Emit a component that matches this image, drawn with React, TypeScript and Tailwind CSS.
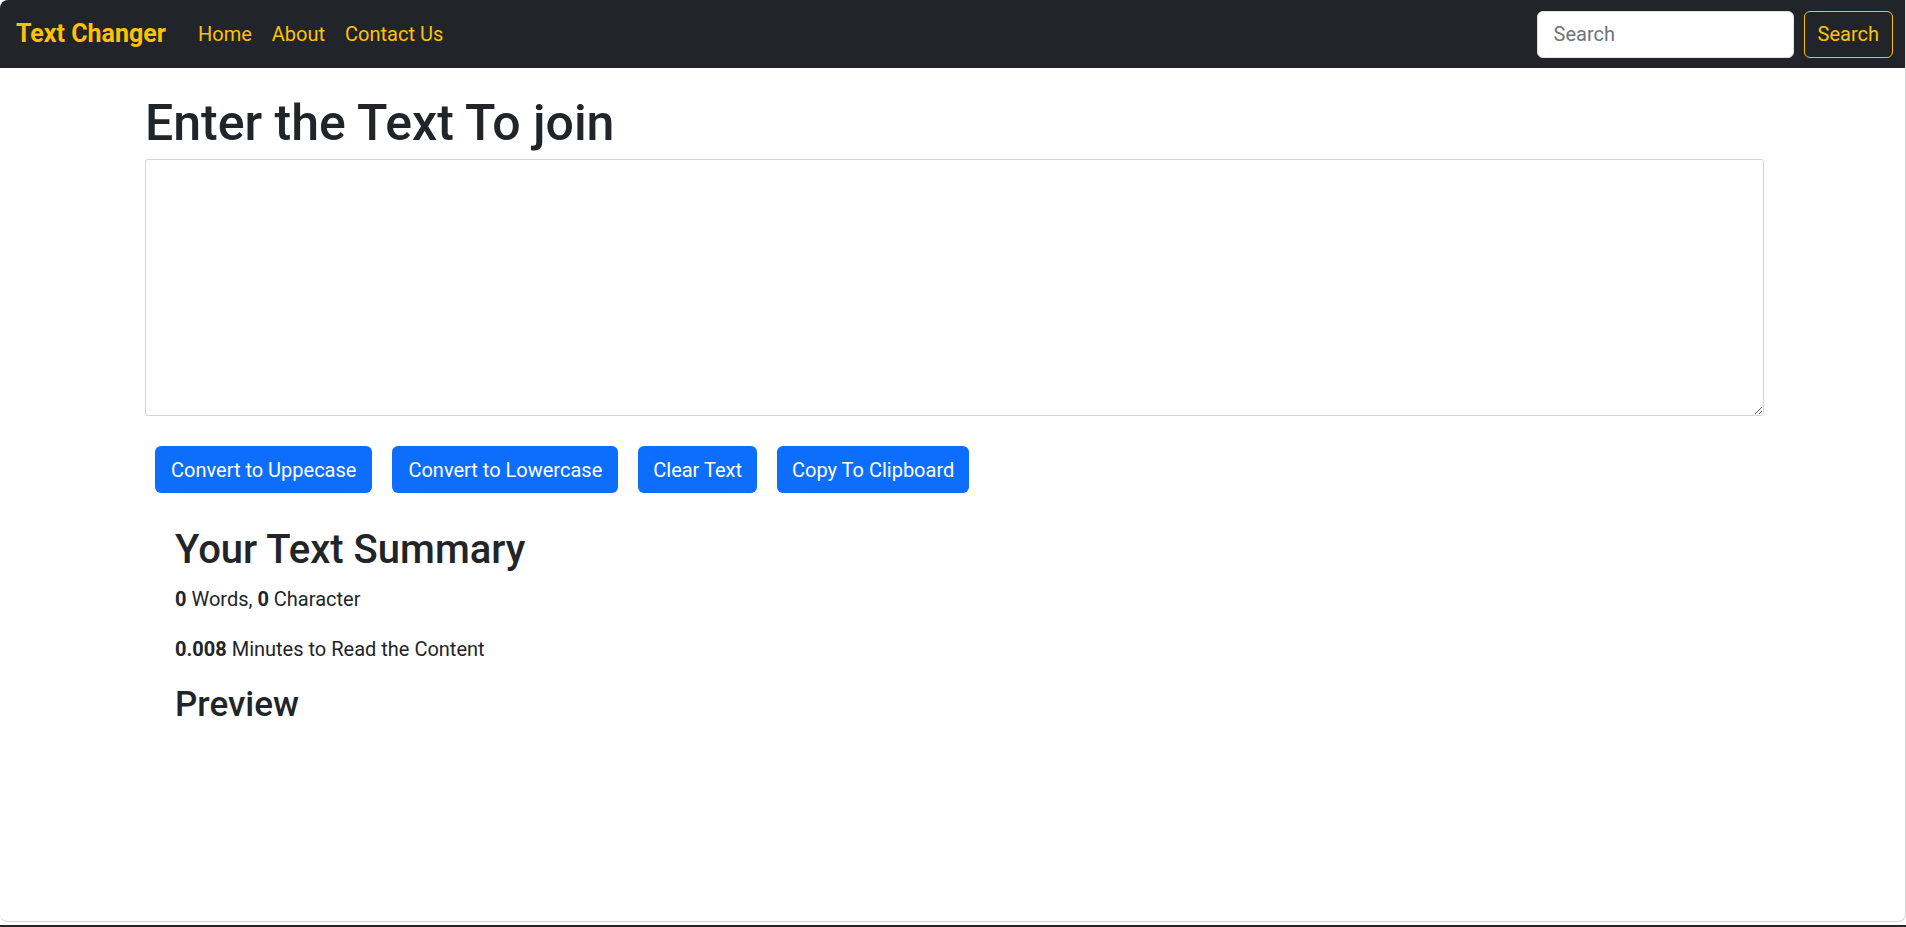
import { useState } from "react";

const Navbar = () => {
  return (
    <nav className="h-[68px] shrink-0 bg-[#212529] flex items-center justify-between pl-[16px] pr-[12px]">
      <div className="flex items-center">
        <a href="#" className="text-[25px] font-bold text-[#ffc107] mr-[22px]">
          Text Changer
        </a>
        <ul className="flex items-center">
          {["Home", "About", "Contact Us"].map((link) => (
            <li key={link}>
              <a href="#" className="px-[10px] text-[20px] text-[#ffc107]">
                {link}
              </a>
            </li>
          ))}
        </ul>
      </div>
      <form className="flex items-center" onSubmit={(e) => e.preventDefault()}>
        <input
          type="search"
          placeholder="Search"
          className="w-[257px] h-[47px] mr-[10px] bg-white rounded-[6px] border border-[#dee2e6] px-[16px] text-[20px] text-[#212529] placeholder:text-[#6c757d] outline-none"
        />
        <button className="h-[47px] px-[13px] rounded-[6px] border border-[#ffc107] text-[20px] text-[#ffc107]">
          Search
        </button>
      </form>
    </nav>
  );
};

const TextForm = () => {
  const [text, setText] = useState("");

  const words = text.split(/\s+/).filter((w) => w.length !== 0).length;
  const minutes = (0.008 * text.split(" ").length).toFixed(3).replace(/0+$/, "");

  const copy = () => {
    navigator.clipboard?.writeText(text);
  };

  return (
    <>
      <div className="w-[1619px] ml-[145px]">
        <h1 className="mt-[25px] mb-[6px] text-[50px] leading-[60px] font-medium text-[#212529]">
          Enter the Text To join
        </h1>
        <textarea
          value={text}
          onChange={(e) => setText(e.target.value)}
          rows={8}
          className="block w-full h-[257px] border border-[#d3d6d9] rounded-[3px] px-[15px] py-[7px] text-[20px] text-[#212529] outline-none"
        />
        <div className="flex gap-[20px] mt-[30px] ml-[10px]">
          <button
            className="h-[47px] px-[16px] rounded-[6px] bg-[#0d6efd] text-white text-[20px]"
            onClick={() => setText(text.toUpperCase())}
          >
            Convert to Uppecase
          </button>
          <button
            className="h-[47px] px-[16px] rounded-[6px] bg-[#0d6efd] text-white text-[20px]"
            onClick={() => setText(text.toLowerCase())}
          >
            Convert to Lowercase
          </button>
          <button
            className="h-[47px] px-[15px] rounded-[6px] bg-[#0d6efd] text-white text-[20px]"
            onClick={() => setText("")}
          >
            Clear Text
          </button>
          <button
            className="h-[47px] px-[15px] rounded-[6px] bg-[#0d6efd] text-white text-[20px]"
            onClick={copy}
          >
            Copy To Clipboard
          </button>
        </div>
      </div>
      <div className="w-[1619px] ml-[145px] mt-[33px] px-[30px] text-[#212529]">
        <h2 className="text-[40px] leading-[48px] font-medium mb-[10px]">Your Text Summary</h2>
        <p className="text-[20px] leading-[30px] mb-[20px]">
          <b>{words}</b> Words, <b>{text.length}</b> Character
        </p>
        <p className="text-[20px] leading-[30px] mb-[20px]">
          <b>{minutes}</b> Minutes to Read the Content
        </p>
        <h3 className="text-[35px] leading-[42px] font-medium mb-[10px]">Preview</h3>
        <p className="text-[20px] leading-[30px]">{text}</p>
      </div>
    </>
  );
};

export default function App() {
  return (
    <div className="h-[927px] flex flex-col bg-white font-['Roboto',sans-serif]">
      <div className="flex-1 flex flex-col bg-white rounded-tl-[8px] rounded-b-[8px] border-r border-b border-[#d4d4d4] overflow-hidden">
        <Navbar />
        <TextForm />
      </div>
      <div className="h-[3px] shrink-0 bg-white" />
      <div className="h-[2px] shrink-0 bg-[#2a2626]" />
    </div>
  );
}
